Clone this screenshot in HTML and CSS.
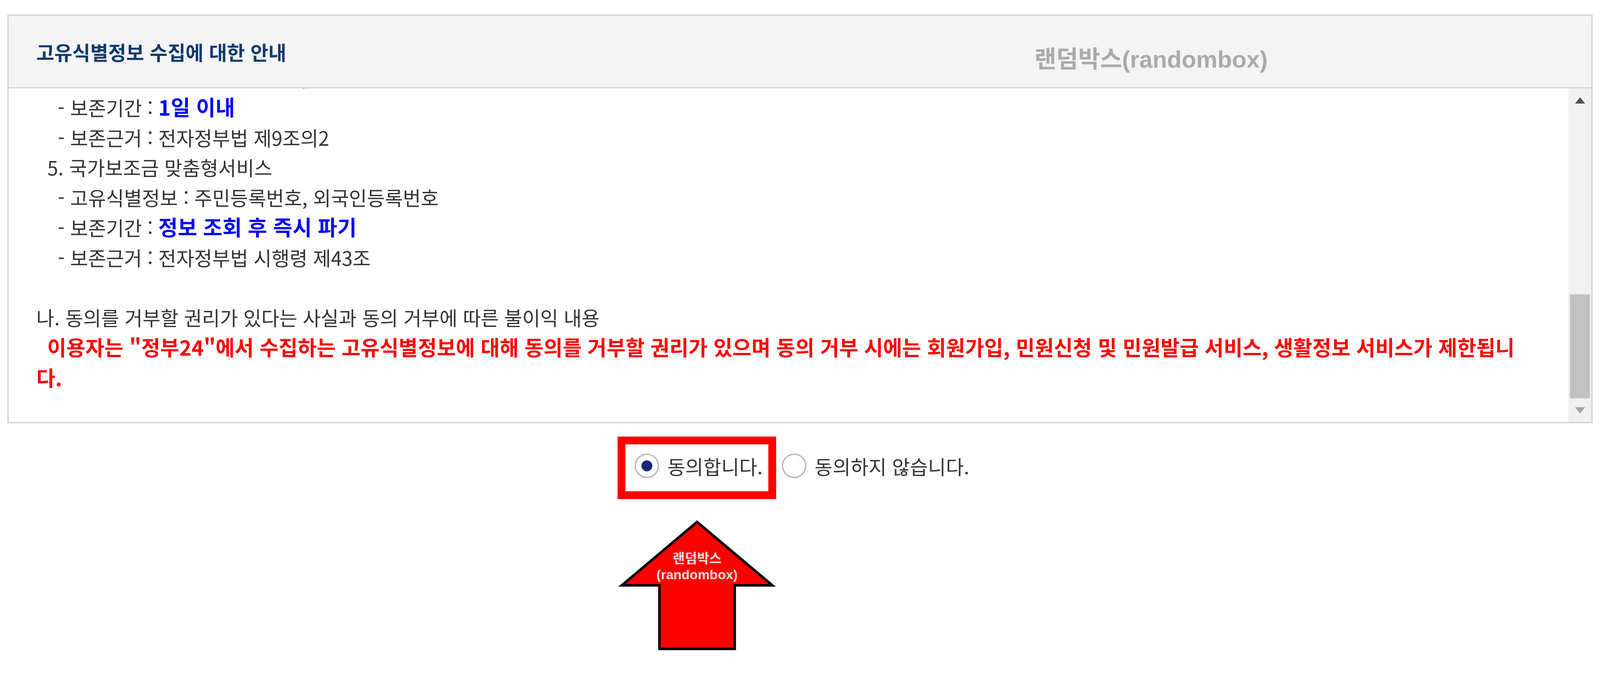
FILE: index.html
```html
<!DOCTYPE html>
<html lang="ko">
<head>
<meta charset="utf-8">
<title>고유식별정보 수집에 대한 안내</title>
<link rel="stylesheet" href="styles.css">
</head>
<body>
<div class="panel">
  <div class="panel-head">
    <h2 class="title">고유식별정보 수집에 대한 안내</h2>
    <div class="watermark">랜덤박스(randombox)</div>
  </div>
  <div class="scroll-area">
    <div class="doc-view">
      <div class="doc">
        <div class="line i2">- 고유식별정보 : 주민등록번호, 외국인등록번호</div>
        <div class="line i2">- 보존기간 : <b class="em-blue">1일 이내</b></div>
        <div class="line i2">- 보존근거 : 전자정부법 제9조의2</div>
        <div class="line i1">5. 국가보조금 맞춤형서비스</div>
        <div class="line i2">- 고유식별정보 : 주민등록번호, 외국인등록번호</div>
        <div class="line i2">- 보존기간 : <b class="em-blue">정보 조회 후 즉시 파기</b></div>
        <div class="line i2">- 보존근거 : 전자정부법 시행령 제43조</div>
        <div class="line">&nbsp;</div>
        <div class="line">나. 동의를 거부할 권리가 있다는 사실과 동의 거부에 따른 불이익 내용</div>
        <div class="line i1"><b class="em-red">이용자는 "정부24"에서 수집하는 고유식별정보에 대해 동의를 거부할 권리가 있으며 동의 거부 시에는 회원가입, 민원신청 및 민원발급 서비스, 생활정보 서비스가 제한됩니</b></div>
        <div class="line"><b class="em-red">다.</b></div>
      </div>
    </div>
    <div class="vscroll">
      <div class="sb-btn"><span class="tri-up"></span></div>
      <div class="sb-track"><div class="sb-thumb"></div></div>
      <div class="sb-btn"><span class="tri-down"></span></div>
    </div>
  </div>
</div>

<div class="consent">
  <label class="opt"><input type="radio" name="agree" class="radio" checked><span>동의합니다.</span></label>
  <label class="opt"><input type="radio" name="agree" class="radio"><span>동의하지 않습니다.</span></label>
</div>

<div class="mark-box"></div>
<div class="mark-arrow">
  <svg class="arrow-shape" width="419" height="341" viewBox="0 0 450 366" preserveAspectRatio="none">
    <polygon points="18,187.5 225,13.5 432,187.5 328.5,187.5 328.5,362 121.5,362 121.5,187.5" fill="#ff0000" stroke="#000" stroke-width="7"/>
  </svg>
  <div class="mark-label">랜덤박스<br>(randombox)</div>
</div>
</body>
</html>
```

FILE: styles.css
```css
html, body {
  margin: 0;
}

html {
  height: 100%;
}

body {
  position: relative;
  box-sizing: border-box;
  min-height: 100%;
  padding: 37px 0 0 19px;
  background: #ffffff;
  font-family: "Noto Sans CJK KR", "Noto Sans", sans-serif;
  color: #333333;
}

.panel {
  width: 4058px;
  box-sizing: border-box;
  border: 3px solid #d0d0d0;
  background: #ffffff;
}

.panel-head {
  position: relative;
  height: 183px;
  background: #f4f4f4;
  border-bottom: 3px solid #d3d3d3;
  display: flex;
  align-items: center;
  padding-left: 71px;
}

.title {
  margin: 0;
  font-size: 50px;
  font-weight: 700;
  color: #0f3a6e;
  line-height: 1.2;
}

.watermark {
  position: absolute;
  left: 2626px;
  top: 82px;
  font-family: "Liberation Sans", "Noto Sans CJK KR", sans-serif;
  font-size: 61px;
  line-height: 1;
  font-weight: 700;
  color: #aaaaaa;
  white-space: nowrap;
}

.scroll-area {
  display: flex;
  height: 854px;
}

.doc-view {
  flex: 1;
  min-width: 0;
  overflow: hidden;
  display: flex;
  flex-direction: column;
  justify-content: flex-end;
  padding: 0 0 76px 71px;
}

.doc {
  flex-shrink: 0;
  font-size: 50px;
  line-height: 76.5px;
  color: #333333;
}

.line {
  white-space: nowrap;
}

.i1 {
  padding-left: 28px;
}

.i2 {
  padding-left: 55px;
}

.em-blue {
  font-size: 54px;
  font-weight: 700;
  color: #0000ff;
}

.em-red {
  font-size: 53px;
  font-weight: 700;
  color: #ff0000;
}

.vscroll {
  width: 59px;
  flex-shrink: 0;
  background: #f1f1f1;
  display: flex;
  flex-direction: column;
}

.sb-btn {
  height: 61px;
  display: flex;
  align-items: center;
  justify-content: center;
  flex-shrink: 0;
}

.tri-up {
  width: 0;
  height: 0;
  border-left: 13.5px solid transparent;
  border-right: 13.5px solid transparent;
  border-bottom: 16px solid #505050;
}

.tri-down {
  width: 0;
  height: 0;
  border-left: 13.5px solid transparent;
  border-right: 13.5px solid transparent;
  border-top: 16px solid #a3a3a3;
}

.sb-track {
  flex: 1;
  display: flex;
  flex-direction: column;
  justify-content: flex-end;
}

.sb-thumb {
  height: 266px;
  margin: 0 4px;
  background: #c1c1c1;
}

.consent {
  width: 4058px;
  box-sizing: border-box;
  padding-left: 10px;
  display: flex;
  justify-content: center;
  align-items: center;
  gap: 49px;
  height: 76px;
  margin-top: 71px;
}

.opt {
  display: flex;
  align-items: center;
  gap: 22px;
  font-size: 50px;
  color: #333333;
  white-space: nowrap;
}

.radio {
  appearance: none;
  -webkit-appearance: none;
  margin: 0;
  width: 62px;
  height: 62px;
  box-sizing: border-box;
  border-radius: 50%;
  border: 3.5px solid #b4b4b4;
  background: #ffffff;
  box-shadow: 0 0 2px rgba(0, 0, 0, 0.25);
}

.radio:checked {
  background: radial-gradient(circle, #1c2480 0, #1c2480 13px, #ffffff 15px);
}

.mark-box {
  position: absolute;
  left: 1581px;
  top: 1117px;
  width: 406px;
  height: 160px;
  box-sizing: border-box;
  border: 20px solid #ff0000;
}

.mark-arrow {
  position: absolute;
  left: 1575px;
  top: 1323px;
  width: 419px;
  height: 341px;
}

.arrow-shape {
  position: absolute;
  left: 0;
  top: 0;
  display: block;
}

.mark-label {
  position: relative;
  padding-top: 86px;
  text-align: center;
  font-family: "Liberation Sans", "Noto Sans CJK KR", sans-serif;
  font-size: 34px;
  line-height: 41px;
  font-weight: 700;
  color: #e0e0e0;
}
```
